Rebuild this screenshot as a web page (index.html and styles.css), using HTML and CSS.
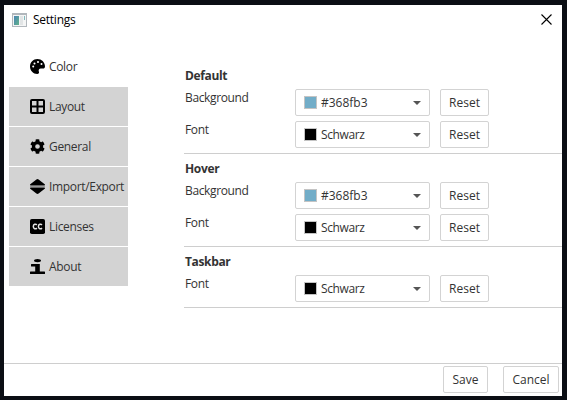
FILE: index.html
```html
<!DOCTYPE html>
<html lang="en">
<head>
<meta charset="utf-8">
<title>Settings</title>
<link rel="stylesheet" href="styles.css">
</head>
<body>
<div class="window">
  <header class="titlebar">
    <svg class="app-icon" width="15" height="14" viewBox="0 0 15 14"><defs><linearGradient id="g" x2="1" y2="1"><stop stop-color="#4a84b4"/><stop offset="1" stop-color="#62b38a"/></linearGradient></defs><path fill="#b1b7bc" d="M0 0h15v14H0z"/><path fill="#f4f5f5" d="M1 2h13v11H1z"/><path fill="url(#g)" d="M2 3h5v9H2z"/><path fill="#e1e4e5" d="M8 3h3v9H8z"/><path fill="#80b9bd" d="M12 3h1v4h-1z"/></svg>
    <span class="title">Settings</span>
    <svg class="close" width="11" height="11" viewBox="0 0 11 11"><path d="M.5.5l10 10M10.500 .5l-10 10" stroke="#000" stroke-width="1.1"/></svg>
  </header>
  <main class="content">
    <nav class="sidebar">
      <div class="tab active"><svg viewBox=".5 .5 15 15"><path fill-rule="evenodd" d="M8 .5C3.700 .5.5 3.800.5 8s3.300 7.500 7.200 7.500c1.500 0 2.200-1.100 1.700-2.300-.7-1.700.2-3.100 1.900-3.100h2.200c1.300 0 2-.9 2-2.300C15.400 3.600 12 .5 8 .5zM3.700 7a1 1 0 1 0 0 2 1 1 0 0 0 0-2zM5 4a1 1 0 1 0 0 2 1 1 0 0 0 0-2zM8.500 2.500a1 1 0 1 0 0 2 1 1 0 0 0 0-2zM12 4.500a1 1 0 1 0 0 2 1 1 0 0 0 0-2z"/></svg><span>Color</span></div>
      <div class="tab"><svg viewBox=".5 .5 15 15"><path fill-rule="evenodd" d="M2.500 .5h11a2 2 0 0 1 2 2v11a2 2 0 0 1-2 2h-11a2 2 0 0 1-2-2v-11a2 2 0 0 1 2-2zM2.500 2.500V7H7V2.500zM9 2.500V7h4.500V2.500zM2.500 9v4.500H7V9zM9 9v4.500h4.500V9z"/></svg><span>Layout</span></div>
      <div class="tab"><svg viewBox="0 0 512 512"><path d="M487.400 315.700l-42.600-24.600c4.300-23.200 4.300-47 0-70.200l42.600-24.600c4.900-2.800 7.100-8.600 5.500-14-11.100-35.600-30-67.800-54.700-94.600-3.800-4.100-10-5.100-14.800-2.300L380.800 110c-17.900-15.400-38.500-27.300-60.800-35.100V25.800c0-5.600-3.900-10.500-9.400-11.700-36.700-8.200-74.300-7.800-109.200 0-5.500 1.200-9.400 6.100-9.400 11.700V75c-22.200 7.900-42.800 19.800-60.800 35.100L88.700 85.500c-4.900-2.800-11-1.900-14.800 2.300-24.700 26.700-43.600 58.900-54.700 94.600-1.700 5.400.6 11.200 5.500 14L67.300 221c-4.300 23.200-4.300 47 0 70.200l-42.600 24.600c-4.900 2.800-7.100 8.600-5.500 14 11.100 35.600 30 67.800 54.700 94.600 3.800 4.100 10 5.100 14.800 2.300l42.600-24.600c17.900 15.400 38.500 27.300 60.800 35.100v49.200c0 5.600 3.900 10.500 9.400 11.700 36.700 8.200 74.300 7.800 109.200 0 5.500-1.200 9.400-6.100 9.400-11.700v-49.200c22.200-7.900 42.800-19.800 60.800-35.100l42.600 24.600c4.900 2.800 11 1.900 14.800-2.300 24.700-26.700 43.600-58.900 54.700-94.600 1.500-5.500-.7-11.300-5.600-14.100zM256 336a80 80 0 1 1 0-160 80 80 0 0 1 0 160z"/></svg><span>General</span></div>
      <div class="tab"><svg viewBox=".5 .5 15 15"><path d="M1.200 7C.4 7 .3 6.300.8 5.800L6.900.9q1.100-.8 2.200 0l6.100 4.900c.5.500.4 1.200-.4 1.200zM1.200 9h13.600c.8 0 .9.700.4 1.200l-6.100 4.900q-1.100.8-2.200 0L.8 10.200C.3 9.700.4 9 1.200 9z"/><path d="M.5 8h15" stroke="#777" stroke-width=".6"/></svg><span>Import/Export</span></div>
      <div class="tab"><svg viewBox=".5 .5 15 15"><rect x=".5" y=".5" width="15" height="15" rx="1.800"/><path d="M7.300 6.500C6.300 5 3.800 5.600 3.800 8s2.500 3 3.500 1.500M12.400 6.500C11.400 5 8.900 5.600 8.900 8s2.500 3 3.500 1.500" fill="none" stroke="#e4e4e4" stroke-width="1.500"/></svg><span>Licenses</span></div>
      <div class="tab"><svg viewBox=".5 .5 15 15"><ellipse cx="8" cy="2.100" rx="3.500" ry="1.600"/><path d="M2 5.500h8.300V13H15q.5 0 .5.500v1.500q0 .5-.5.500H1q-.5 0-.5-.5v-1.500q0-.5.5-.5h4.700V8H2q-.5 0-.5-.5V6q0-.5.5-.5z"/></svg><span>About</span></div>
    </nav>
    <div class="panel">
      <section class="group">
        <h2>Default</h2>
        <div class="row"><label>Background</label><div class="combo"><i class="swatch blue"></i><span>#368fb3</span><b class="arrow"></b></div><button>Reset</button></div>
        <div class="row"><label>Font</label><div class="combo"><i class="swatch"></i><span class="name">Schwarz</span><b class="arrow"></b></div><button>Reset</button></div>
      </section>
      <section class="group">
        <h2>Hover</h2>
        <div class="row"><label>Background</label><div class="combo"><i class="swatch blue"></i><span>#368fb3</span><b class="arrow"></b></div><button>Reset</button></div>
        <div class="row"><label>Font</label><div class="combo"><i class="swatch"></i><span class="name">Schwarz</span><b class="arrow"></b></div><button>Reset</button></div>
      </section>
      <section class="group">
        <h2>Taskbar</h2>
        <div class="row"><label>Font</label><div class="combo"><i class="swatch"></i><span class="name">Schwarz</span><b class="arrow"></b></div><button>Reset</button></div>
      </section>
    </div>
  </main>
  <footer class="footer"><button class="save">Save</button><button class="cancel">Cancel</button></footer>
</div>
</body>
</html>
```
FILE: styles.css
```css
* { box-sizing: border-box; }
body {
  margin: 0;
  height: 400px;
  padding: 5px 5px 4px 4px;
  overflow: hidden;
  background: #0b0e14;
  color: #333;
  font: 12px/16px "Open Sans", "Noto Sans", sans-serif;
}
.window {
  display: flex;
  flex-direction: column;
  height: 391px;
  background: #fff;
}
.titlebar {
  display: flex;
  align-items: center;
  height: 29px;
  padding: 0 10px 0 8px;
  color: #000;
}
.title { flex: 1; margin-left: 6px; letter-spacing: -.25px; }
.content { flex: 1; display: flex; }
.sidebar {
  display: flex;
  flex-direction: column;
  gap: 1px;
  width: 119px;
  margin: 13px 56px 0 5px;
}
.tab {
  display: flex;
  align-items: center;
  gap: 4px;
  height: 39px;
  padding-left: 21px;
  background: #d3d3d3;
  letter-spacing: -.33px;
  white-space: nowrap;
}
.tab.active { background: #fff; }
.tab svg { flex: none; width: 15px; height: 15px; }
.panel { flex: 1; padding-top: 27px; }
.group {
  display: flex;
  flex-direction: column;
  gap: 5px;
  padding: 7px 0 5px;
  border-bottom: 1px solid #cecece;
}
h2 { margin: 0 0 0 1px; font: inherit; font-weight: 700; letter-spacing: -.35px; }
.row { display: flex; height: 27px; }
label { width: 110px; margin-left: 1px; padding-top: 1px; letter-spacing: -.37px; }
.combo {
  display: flex;
  align-items: center;
  width: 135px;
  margin-right: 10px;
  padding: 0 8px;
  border: 1px solid #d3d3d3;
  border-radius: 2px;
}
.name { letter-spacing: -.4px; }
.swatch {
  width: 13px;
  height: 13px;
  margin-right: 4px;
  border: 1px solid #c4c4c4;
  background: #000;
}
.blue { background: #72adc8; }
.arrow {
  margin-left: auto;
  border: 4px solid transparent;
  border-top-color: #555;
  border-bottom: 0;
}
button {
  width: 49px;
  height: 27px;
  padding: 0;
  border: 1px solid #d3d3d3;
  border-radius: 2px;
  background: #fff;
  color: #333;
  font: inherit;
}
.footer {
  display: flex;
  justify-content: flex-end;
  gap: 15px;
  height: 33px;
  padding: 2px 3px 0 0;
  border-top: 1px solid #cecece;
}
.save { width: 45px; }
.cancel { width: 56px; }
```
